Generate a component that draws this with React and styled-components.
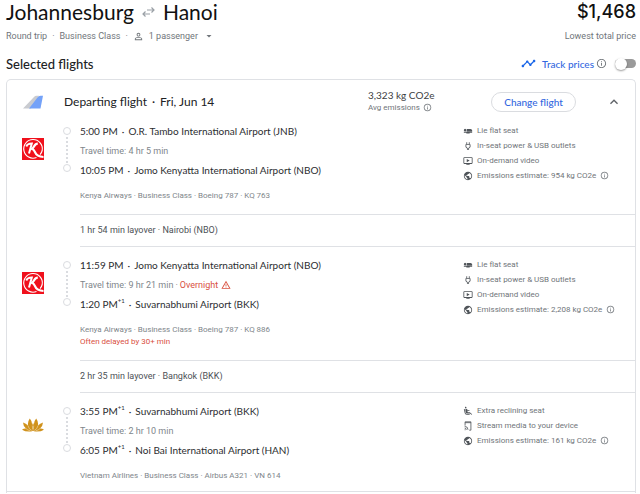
import React, { useState } from "react";
import styled, { createGlobalStyle } from "styled-components";
import {
  MdPersonOutline,
  MdArrowDropDown,
  MdTimeline,
  MdInfoOutline,
  MdKeyboardArrowUp,
  MdKeyboardArrowDown,
  MdWarningAmber,
  MdAirlineSeatFlat,
  MdOutlinePower,
  MdOndemandVideo,
  MdPublic,
  MdAirlineSeatReclineExtra,
} from "react-icons/md";

const display = `"Lato", "Liberation Sans", sans-serif`;
const body = `"Roboto", "Liberation Sans", sans-serif`;

const GlobalStyle = createGlobalStyle`
  * { box-sizing: border-box; }
  body { margin: 0; background: #fff; color: #202124; font-family: ${body}; }
  svg { display: block; flex: none; }
  h1, h2, h3, p, ul { margin: 0; padding: 0; font-weight: 400; }
  button { font: inherit; color: inherit; background: none; border: 0; padding: 0; cursor: pointer; }
`;

const Page = styled.main`
  padding: 0 4px 0 6px;
`;

const TripHeader = styled.header`
  display: flex;
  justify-content: space-between;
`;

const Route = styled.h1`
  display: flex;
  align-items: center;
  gap: 8px;
  font: 400 21px/24px ${display};
  color: #111;
`;

const Price = styled.p`
  font: 500 18px/24px "Inter", "Liberation Sans", sans-serif;
  color: #111;
  text-align: right;
`;

const TripMeta = styled.div`
  display: flex;
  align-items: center;
  gap: 5px;
  height: 24px;
  font-size: 9px;
  line-height: 12px;
  color: #70757a;
  white-space: nowrap;
`;

const PassengerButton = styled.button`
  display: flex;
  align-items: center;
  gap: 5px;
`;

const SectionBar = styled.div`
  display: flex;
  align-items: center;
  justify-content: space-between;
  height: 31px;
`;

const SectionTitle = styled.h2`
  font: 500 13px/16px ${display};
`;

const Track = styled.div`
  display: flex;
  align-items: center;
  gap: 2px;
  color: #70757a;
`;

const TrackLabel = styled.label`
  display: flex;
  align-items: center;
  gap: 6px;
  font: 500 10px/12px ${display};
  color: #3367e0;
`;

const Switch = styled.input`
  appearance: none;
  display: flex;
  align-items: center;
  width: 21px;
  height: 9px;
  margin: 0 0 0 6px;
  border-radius: 5px;
  background: ${(p) => (p.checked ? "#8ab4f8" : "#9a9a9a")};
  justify-content: ${(p) => (p.checked ? "flex-end" : "flex-start")};
  cursor: pointer;
  &::before {
    content: "";
    flex: none;
    width: 12px;
    height: 12px;
    border-radius: 50%;
    background: #fff;
    box-shadow: 0 1px 2px rgba(0, 0, 0, 0.4);
  }
`;

const Card = styled.section`
  border: 1px solid #dfe1e5;
  border-bottom: 0;
  border-radius: 5px 5px 0 0;
`;

const CardHeader = styled.header`
  display: grid;
  grid-template-columns: 42px 1fr 123px 85px 59px;
  align-items: center;
  height: 44px;
  padding-left: 15px;
`;

const CardTitle = styled.h3`
  display: flex;
  gap: 5px;
  font: 400 12px/16px ${display};
`;

const Emissions = styled.div`
  padding-bottom: 2px;
`;

const EmissionsValue = styled.p`
  font: 400 10px/13px ${display};
  color: #3c4043;
`;

const EmissionsNote = styled.p`
  display: flex;
  align-items: center;
  gap: 3px;
  font-size: 8px;
  line-height: 12px;
  color: #70757a;
`;

const ChangeButton = styled.button`
  height: 20px;
  border: 1px solid #dadce0;
  border-radius: 10px;
  font: 500 10px/12px ${display};
  color: #3367e0;
`;

const CollapseButton = styled.button`
  justify-self: center;
  color: #5f6368;
  margin-left: 16px;
`;

const Leg = styled.article`
  display: grid;
  grid-template-columns: 40px 18px 1fr 172px;
  align-items: start;
  padding: ${(p) => (p.$first ? "0" : "11px")} 0 ${(p) => (p.$last ? "9px" : "12px")} 15px;
`;

const Logo = styled.div`
  padding-top: 14px;
`;

const Timeline = styled.div`
  display: flex;
  flex-direction: column;
  align-items: center;
  width: 9px;
  height: 45px;
  margin-top: 3px;
`;

const StopDot = styled.span`
  width: 8px;
  height: 8px;
  border: 1px solid #dadce0;
  border-radius: 50%;
`;

const StopLine = styled.span`
  flex: 1;
  margin: 2px 0 1px;
  border-left: 2px dotted #dadce0;
`;

const Stop = styled.p`
  display: flex;
  gap: 4px;
  font: 400 10px/14px ${display};
  color: #2b2d30;
  white-space: nowrap;
`;

const DayShift = styled.sup`
  font-size: 6px;
  line-height: 8px;
  vertical-align: top;
`;

const TravelTime = styled.p`
  display: flex;
  align-items: center;
  gap: 2px;
  margin: 7px 0 6px;
  font-size: 9px;
  line-height: 12px;
  color: #80868b;
`;

const Warning = styled.span`
  display: flex;
  align-items: center;
  gap: 3px;
  color: #d9503f;
`;

const Details = styled.p`
  margin-top: 13px;
  font-size: 8px;
  line-height: 12px;
  color: #80868b;
`;

const Delay = styled.p`
  font-size: 8px;
  line-height: 12px;
  color: #d9503f;
`;

const Amenities = styled.ul`
  list-style: none;
  margin-top: -1px;
`;

const Amenity = styled.li`
  display: flex;
  align-items: center;
  gap: 4px;
  height: 15px;
  font-size: 8px;
  line-height: 12px;
  color: #70757a;
  white-space: nowrap;
  > svg:first-child { color: #50555a; }
`;

const Layover = styled.p`
  margin-left: 73px;
  border: solid #dfe1e5;
  border-width: 1px 0;
  font-size: 9px;
  line-height: 31px;
  color: #4d5156;
`;

const NextSection = styled.div`
  height: 2px;
  border: 1px solid #dfe1e5;
  border-bottom: 0;
`;

const SwapIcon = () => (
  <svg width="13" height="12" viewBox="0 0 13 12" fill="none" stroke="#9aa0a6" strokeWidth="1.2" aria-hidden="true">
    <path d="M5 4H12M9.500 1.500 12 4 9.500 6.500M8 8H1M3.500 5.500 1 8l2.500 2.500" />
  </svg>
);

const TailIcon = () => (
  <svg width="22" height="14" viewBox="0 0 22 14" aria-hidden="true">
    <path d="M1 13.5 12 2q1-1.2 2.5-1.2H17L9 13.5z" fill="#c9cbd0" />
    <path d="M7 13.5 15.5 2.5Q16.5.8 18.5.8H21L18.5 13.5z" fill="#74a2f8" />
  </svg>
);

const KenyaLogo = () => (
  <svg width="22" height="22" viewBox="0 0 22 22" role="img" aria-label="Kenya Airways">
    <path fill="#f0101c" d="M0 0h22v22H0z" />
    <path d="M14.500 19.500A9.300 9.300 0 1 1 20.200 12.500Q19.600 15 18 16.700" fill="none" stroke="#fff" strokeWidth="1.1" />
    <path d="M4.300 8.500Q5.500 5.700 9.800 5.600L7 15.500" fill="none" stroke="#fff" strokeWidth="2" />
    <path d="M15.800 5.600Q13.500 5.600 12.300 8T9 11.300" fill="none" stroke="#fff" strokeWidth="2.300" />
    <path d="M10 10.800Q12 11.500 13 14.200 14.800 18.800 21.500 19" fill="none" stroke="#fff" strokeWidth="2.200" />
  </svg>
);

const LotusLogo = () => (
  <svg width="22" height="14" viewBox="0 0 22 14" fill="#d0921c" role="img" aria-label="Vietnam Airlines">
    <path d="M10 13.300Q4 14.200 0 11.700 1.500 10.400 4 10.500 1.200 8.300 1 4.500 4 5.300 6 7.500 5.500 3.500 7.800.5 10.300 3.200 10.300 7L11 4.500 11.700 7Q11.700 3.200 14.200.5 16.500 3.500 16 7.500 18 5.300 21 4.500 20.800 8.300 18 10.500 20.500 10.400 22 11.700 18 14.200 12 13.300L11 12.600z" />
    <path d="M9.800 12.500Q6.500 11 6 7.500M12.200 12.500Q15.500 11 16 7.500M8.500 12.800Q5.500 12.300 4 10.500M13.500 12.800Q16.500 12.300 18 10.500M10.300 7.500 10.700 11.500M11.700 7.500 11.300 11.500" fill="none" stroke="#fff" strokeWidth=".4" />
  </svg>
);

const StreamIcon = () => (
  <svg width="10" height="10" viewBox="0 0 24 24" fill="none" stroke="currentColor" strokeWidth="2" aria-hidden="true">
    <path d="M5 11V2h14v20h-4M5 4h14M4 21h2M4 17a4 4 0 0 1 4 4M4 13a8 8 0 0 1 8 8" />
  </svg>
);

const baseAmenities = [
  [MdAirlineSeatFlat, "Lie flat seat"],
  [MdOutlinePower, "In-seat power & USB outlets"],
  [MdOndemandVideo, "On-demand video"],
];

const legs = [
  {
    logo: KenyaLogo,
    from: ["5:00 PM", "", "O.R. Tambo International Airport (JNB)"],
    time: "Travel time: 4 hr 5 min",
    to: ["10:05 PM", "", "Jomo Kenyatta International Airport (NBO)"],
    details: "Kenya Airways · Business Class · Boeing 787 · KQ 763",
    amenities: baseAmenities,
    emissions: "954",
    layover: "1 hr 54 min layover · Nairobi (NBO)",
  },
  {
    logo: KenyaLogo,
    from: ["11:59 PM", "", "Jomo Kenyatta International Airport (NBO)"],
    time: "Travel time: 9 hr 21 min",
    overnight: true,
    to: ["1:20 PM", "+1", "Suvarnabhumi Airport (BKK)"],
    details: "Kenya Airways · Business Class · Boeing 787 · KQ 886",
    delay: "Often delayed by 30+ min",
    amenities: baseAmenities,
    emissions: "2,208",
    layover: "2 hr 35 min layover · Bangkok (BKK)",
  },
  {
    logo: LotusLogo,
    from: ["3:55 PM", "+1", "Suvarnabhumi Airport (BKK)"],
    time: "Travel time: 2 hr 10 min",
    to: ["6:05 PM", "+1", "Noi Bai International Airport (HAN)"],
    details: "Vietnam Airlines · Business Class · Airbus A321 · VN 614",
    amenities: [
      [MdAirlineSeatReclineExtra, "Extra reclining seat"],
      [StreamIcon, "Stream media to your device"],
    ],
    emissions: "161",
  },
];

const StopRow = ({ stop: [time, shift, airport] }) => (
  <Stop>
    <span>{time}{shift && <DayShift>{shift}</DayShift>}</span>
    <span>·</span>
    <span>{airport}</span>
  </Stop>
);

const FlightLeg = ({ leg, first, last }) => {
  const LegLogo = leg.logo;
  return (
    <>
      <Leg $first={first} $last={last}>
        <Logo><LegLogo /></Logo>
        <Timeline><StopDot /><StopLine /><StopDot /></Timeline>
        <div>
          <StopRow stop={leg.from} />
          <TravelTime>
            {leg.time}
            {leg.overnight && (
              <><span>·</span><Warning>Overnight <MdWarningAmber size={10} /></Warning></>
            )}
          </TravelTime>
          <StopRow stop={leg.to} />
          <Details>{leg.details}</Details>
          {leg.delay && <Delay>{leg.delay}</Delay>}
        </div>
        <Amenities>
          {leg.amenities.map(([Icon, label]) => (
            <Amenity key={label}><Icon size={10} />{label}</Amenity>
          ))}
          <Amenity><MdPublic size={10} />Emissions estimate: {leg.emissions} kg CO2e<MdInfoOutline size={9} /></Amenity>
        </Amenities>
      </Leg>
      {leg.layover && <Layover>{leg.layover}</Layover>}
    </>
  );
};

export default function App() {
  const [tracking, setTracking] = useState(false);
  const [open, setOpen] = useState(true);
  return (
    <>
      <GlobalStyle />
      <Page>
        <TripHeader>
          <div>
            <Route>Johannesburg <SwapIcon /> Hanoi</Route>
            <TripMeta>
              <span>Round trip</span><span>·</span>
              <span>Business Class</span><span>·</span>
              <PassengerButton type="button">
                <MdPersonOutline size={11} />1 passenger<MdArrowDropDown size={12} />
              </PassengerButton>
            </TripMeta>
          </div>
          <div>
            <Price>$1,468</Price>
            <TripMeta>Lowest total price</TripMeta>
          </div>
        </TripHeader>
        <SectionBar>
          <SectionTitle>Selected flights</SectionTitle>
          <Track>
            <TrackLabel htmlFor="track"><MdTimeline size={15} color="#1a66e8" />Track prices</TrackLabel>
            <MdInfoOutline size={11} />
            <Switch id="track" type="checkbox" role="switch" checked={tracking} onChange={() => setTracking(!tracking)} />
          </Track>
        </SectionBar>
        <Card>
          <CardHeader>
            <TailIcon />
            <CardTitle><span>Departing flight</span><span>·</span><span>Fri, Jun 14</span></CardTitle>
            <Emissions>
              <EmissionsValue>3,323 kg CO2e</EmissionsValue>
              <EmissionsNote>Avg emissions <MdInfoOutline size={9} /></EmissionsNote>
            </Emissions>
            <ChangeButton type="button">Change flight</ChangeButton>
            <CollapseButton type="button" aria-label="Toggle details" onClick={() => setOpen(!open)}>
              {open ? <MdKeyboardArrowUp size={16} /> : <MdKeyboardArrowDown size={16} />}
            </CollapseButton>
          </CardHeader>
          {open && legs.map((leg, i) => (
            <FlightLeg key={leg.details} leg={leg} first={i === 0} last={i === legs.length - 1} />
          ))}
        </Card>
        <NextSection />
      </Page>
    </>
  );
}
